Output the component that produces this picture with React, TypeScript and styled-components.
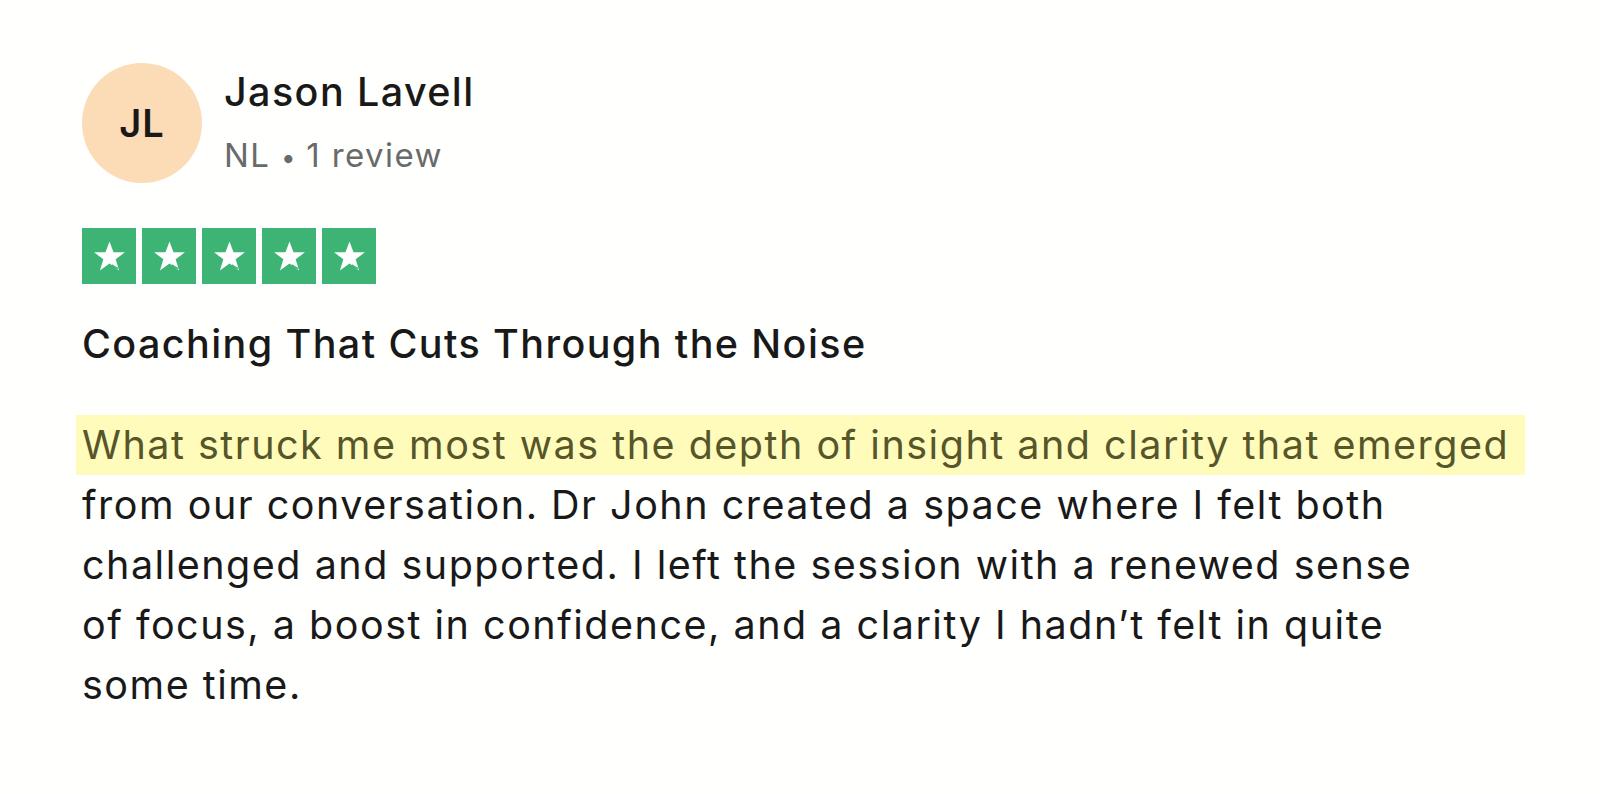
import { createGlobalStyle } from "styled-components";
import styled from "styled-components";

const lines = [
  "What struck me most was the depth of insight and clarity that emerged",
  "from our conversation. Dr John created a space where I felt both",
  "challenged and supported. I left the session with a renewed sense",
  "of focus, a boost in confidence, and a clarity I hadn\u2019t felt in quite",
  "some time.",
];

const Star = () => (
  <svg width="37" height="37" viewBox="0 0 24 24">
    <polygon
      points="12,2.2 14.6,9.3 22,9.3 16,13.8 18.2,21 12,16.6 5.8,21 8,13.8 2,9.3 9.4,9.3"
      fill="#fff"
    />
    <path d="M13.4 17.5 L17.6 19.8" stroke="#3db474" strokeWidth="0.9" />
  </svg>
);

const App = () => {
  return (
    <>
      <GlobalStyle />
      <Card>
        <Header>
          <Avatar>JL</Avatar>
          <Who>
            <Name>Jason Lavell</Name>
            <Meta>
              NL <Dot>&bull;</Dot> 1 review
            </Meta>
          </Who>
        </Header>

        <Stars>
          {[0, 1, 2, 3, 4].map((i) => (
            <StarBox key={i}>
              <Star />
            </StarBox>
          ))}
        </Stars>

        <Title>Coaching That Cuts Through the Noise</Title>

        <Body>
          {lines.map((line, i) => (
            <Line key={i} highlighted={i === 0}>
              {line}
            </Line>
          ))}
        </Body>
      </Card>
    </>
  );
};

const GlobalStyle = createGlobalStyle`
  html, body {
    margin: 0;
    padding: 0;
    background: #fffffd;
  }
  body {
    font-family: Inter, "Noto Sans", sans-serif;
    color: #191919;
  }
`;

const Card = styled.main`
  padding: 63px 0 0 82px;
  display: flex;
  flex-direction: column;
  align-items: flex-start;
`;

const Header = styled.header`
  display: flex;
  align-items: flex-start;
  gap: 22px;
`;

const Avatar = styled.div`
  width: 120px;
  height: 120px;
  border-radius: 50%;
  background: #fcdcb6;
  display: flex;
  align-items: center;
  justify-content: center;
  font-size: 38px;
  font-weight: 600;
  color: #191919;
  letter-spacing: 1px;
`;

const Who = styled.div`
  display: flex;
  flex-direction: column;
  gap: 19px;
  padding-top: 5px;
`;

const Name = styled.div`
  font-size: 39.5px;
  line-height: 48px;
  font-weight: 500;
  letter-spacing: 1.4px;
`;

const Meta = styled.div`
  font-size: 33px;
  line-height: 40px;
  color: #696a6a;
  letter-spacing: 1.4px;
`;

const Dot = styled.span`
  font-size: 26px;
  letter-spacing: 0;
`;

const Stars = styled.div`
  display: flex;
  gap: 6px;
  margin-top: 45px;
`;

const StarBox = styled.div`
  width: 54px;
  height: 56px;
  background: #3db474;
  display: flex;
  align-items: center;
  justify-content: center;
`;

const Title = styled.h2`
  margin: 36px 0 0;
  font-size: 39.5px;
  line-height: 48px;
  font-weight: 500;
  letter-spacing: 1.4px;
`;

const Body = styled.p`
  margin: 47px 0 0;
  font-size: 39.5px;
  line-height: 60px;
  font-weight: 400;
  letter-spacing: 1.5px;
`;

const Line = styled.span<{ highlighted?: boolean }>`
  display: block;
  width: fit-content;
  margin-left: ${({ highlighted }) => (highlighted ? "-6px" : "0")};
  padding: ${({ highlighted }) => (highlighted ? "0 16px 0 6px" : "0")};
  background: ${({ highlighted }) => (highlighted ? "#fefbbb" : "transparent")};
  color: ${({ highlighted }) => (highlighted ? "#56562a" : "#191919")};
`;

export default App;
